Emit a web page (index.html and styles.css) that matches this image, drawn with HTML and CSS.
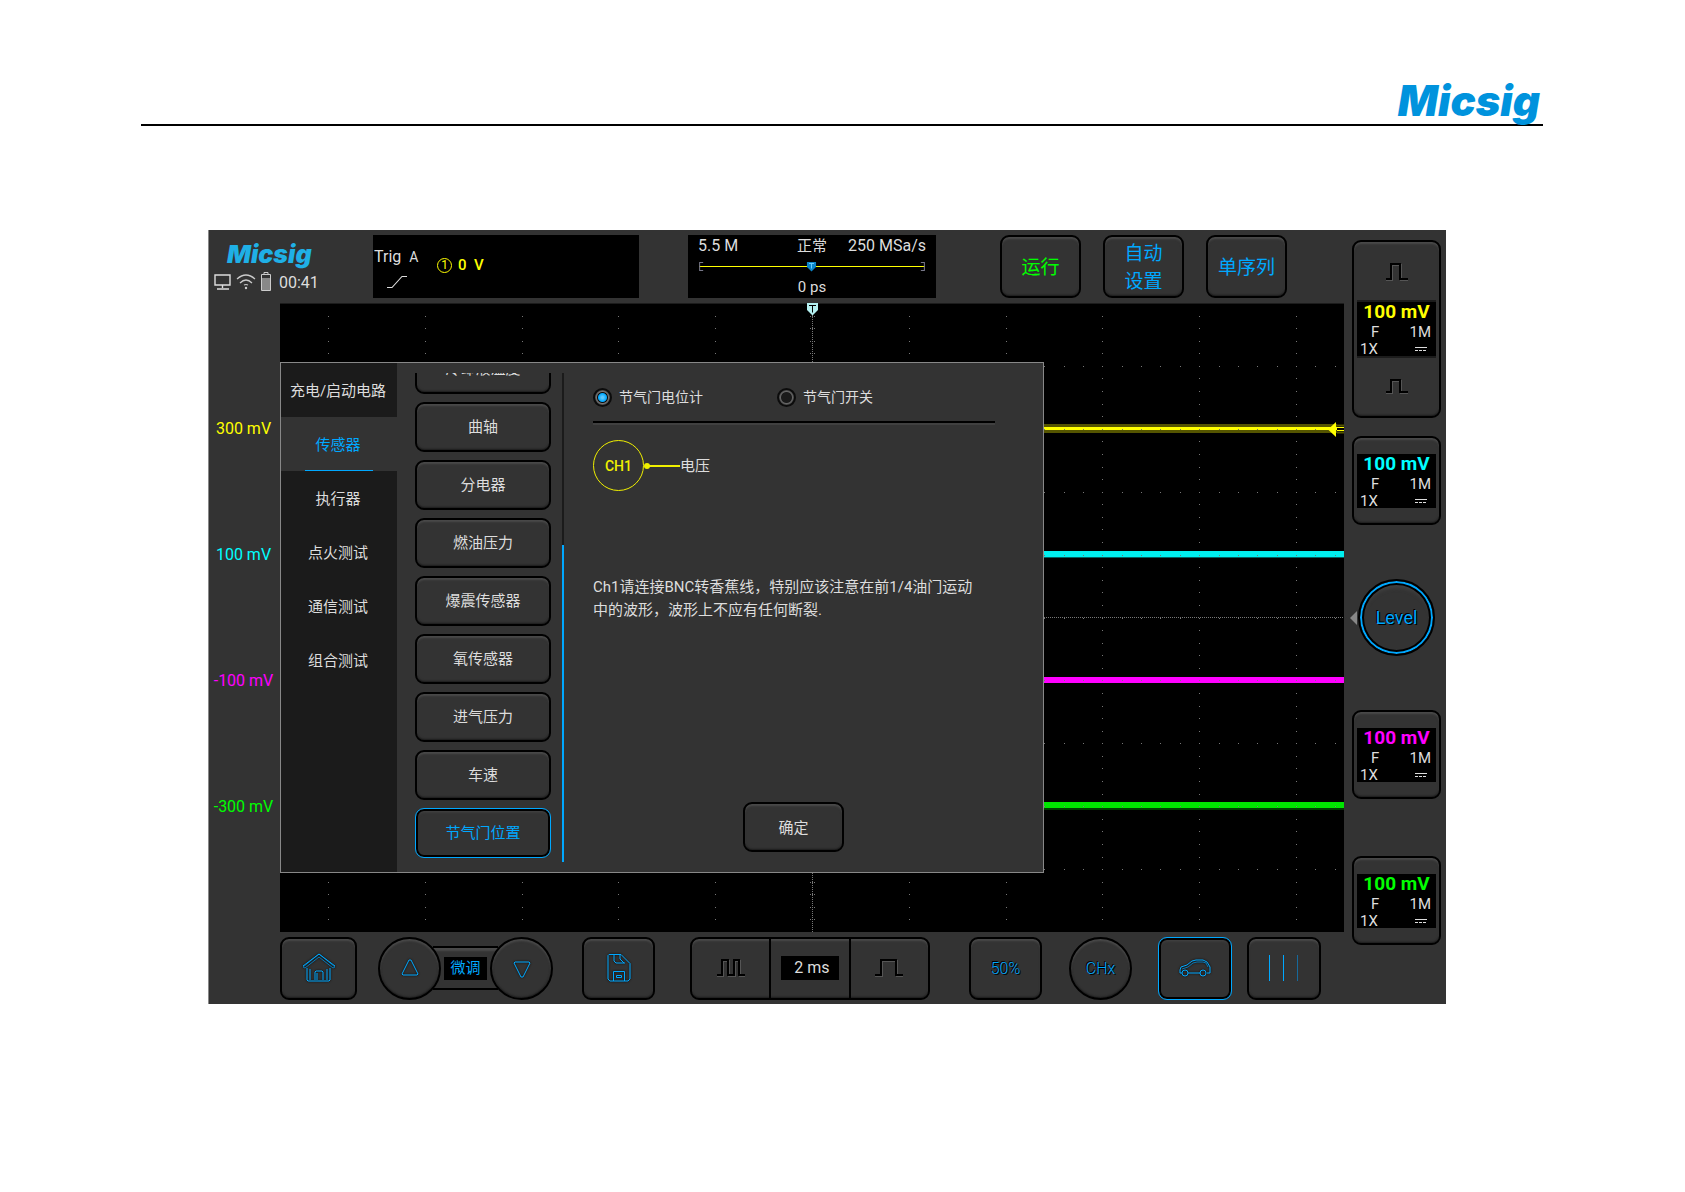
FILE: index.html
```html
<!DOCTYPE html>
<html lang="zh-CN">

<head>
  <meta charset="UTF-8">
  <meta name="viewport" content="width=device-width, initial-scale=1.0">
  <title>Micsig</title>
  <link rel="stylesheet" href="styles.css">
</head>

<body>

  <!-- Page header -->
  <header class="page-header">
    <span class="brand">Micsig</span>
  </header>

  <main class="scope">

    <!-- Top bar -->
    <div class="top-bar">
      <div class="status">
        <span class="brand brand-small">Micsig</span>
        <div class="status-row">
          <svg width="18" height="18" viewBox="0 0 18 18" fill="none" stroke="#ddd" stroke-width="1.4">
            <path d="M1 2h15v10H1zM8.5 12v3M3 16h12" />
          </svg>
          <svg width="20" height="18" viewBox="0 0 20 18" fill="none" stroke="#ccc" stroke-width="1.2">
            <path d="M1 6Q10-2 19 6M4 10Q10 4 16 10" />
            <path d="M8 12q2-1 4 0" />
            <circle cx="10" cy="15" r="0.6" fill="#ccc" />
          </svg>
          <svg width="12" height="20" viewBox="0 0 12 20">
            <path d="M4 2V.5h4V2M1.500 2.500h9v16h-9z" fill="none" stroke="#ccc" />
            <path d="M2 6h8v12H2z" fill="#888" />
          </svg>
          <span class="clock">00:41</span>
        </div>
      </div>

      <div class="trig-panel">
        <div class="trig-type">
          <span>Trig <small>A</small></span>
          <svg width="22" height="14" viewBox="0 0 22 14" fill="none" stroke="#ddd" stroke-width="1.1">
            <path d="M1 12.500h5L16 1.500h5" />
          </svg>
        </div>
        <div class="trig-level"><span class="trig-source">1</span>0 &nbsp;V</div>
      </div>

      <div class="time-panel">
        <div class="time-row">
          <span>5.5 M</span>
          <span class="mode">正常</span>
          <span>250 MSa/s</span>
        </div>
        <svg class="time-range" viewBox="0 0 226 12">
          <path d="M1 6.500h224" stroke="#ff0" />
          <path d="M5 2.500H1.500v8H5M221 2.500h3.500v8H221" fill="none" stroke="#778" />
          <path d="M108 2h9v5l-4.500 4.500L108 7z" fill="#0a84c8" />
          <path d="M110 3.500h5M112.500 3.500v5" stroke="#6cf" />
        </svg>
        <span class="time-offset">0 ps</span>
      </div>

      <div class="run-buttons">
        <button class="btn run">运行</button>
        <button class="btn">自动<br>设置</button>
        <button class="btn">单序列</button>
      </div>
    </div>

    <!-- Voltage labels -->
    <div class="volt-labels">
      <span class="ch1">300 mV</span>
      <span class="ch2">100 mV</span>
      <span class="ch3">-100 mV</span>
      <span class="ch4">-300 mV</span>
    </div>

    <!-- Waveform area -->
    <div class="plot">
      <svg class="plot-svg" viewBox="0 0 1064 629">
        <path d="M0 .5h1064" stroke="#1c1c1c" />
        <path d="M0 121h1064v9H0z" fill="#555500" />
        <path d="M0 124h1064v3H0z" fill="#ffff00" />
        <path d="M0 248h1064v6H0z" fill="#00f0f0" />
        <path d="M0 254h1064v1H0z" fill="#006060" />
        <path d="M0 374h1064v6H0z" fill="#ff00ff" />
        <path d="M0 499h1064v6H0z" fill="#00e600" />
        <path d="M0 505h1064v2H0z" fill="#003c00" />
        <path id="gridDots" fill="#777" shape-rendering="crispEdges" />
        <!-- trigger level arrow -->
        <path d="M1057 119h7v14h-7z" fill="#000" />
        <path d="M1056 119v15l-8-7.500z" fill="#ffff00" />
        <path d="M1057 122.500h7M1057 129.500h7" stroke="#555500" stroke-width="2" />
        <path d="M1057 124.500h7M1057 127.500h7" stroke="#ffff00" />
        <!-- trigger position -->
        <path d="M527 0h11v7l-5.500 5.500L527 7z" fill="#b4f0f0" />
        <path d="M529 2.500h7M532.500 2.500v7" stroke="#000" />
      </svg>

      <!-- Automotive test dialog -->
      <div class="dialog">
        <nav class="tabs">
          <button class="tab">充电/启动电路</button>
          <button class="tab active">传感器</button>
          <button class="tab">执行器</button>
          <button class="tab">点火测试</button>
          <button class="tab">通信测试</button>
          <button class="tab">组合测试</button>
        </nav>

        <div class="sensor-list">
          <button class="btn">冷却液温度</button>
          <button class="btn">曲轴</button>
          <button class="btn">分电器</button>
          <button class="btn">燃油压力</button>
          <button class="btn">爆震传感器</button>
          <button class="btn">氧传感器</button>
          <button class="btn">进气压力</button>
          <button class="btn">车速</button>
          <button class="btn selected">节气门位置</button>
        </div>
        <div class="scrollbar"><div class="scroll-thumb"></div></div>

        <div class="detail">
          <div class="options">
            <label><input type="radio" name="throttle" checked>节气门电位计</label>
            <label><input type="radio" name="throttle">节气门开关</label>
          </div>
          <div class="wiring">
            <span class="probe">CH1</span>
            <svg width="36" height="8" viewBox="0 0 36 8">
              <circle cx="3" cy="4" r="3" fill="#f0f000" />
              <path d="M3 4h33" stroke="#f0f000" stroke-width="2" />
            </svg>
            <span class="wire-name">电压</span>
          </div>
          <p class="hint">Ch1请连接BNC转香蕉线，特别应该注意在前1/4油门运动中的波形，波形上不应有任何断裂.</p>
          <button class="btn confirm">确定</button>
        </div>
      </div>
    </div>

    <!-- Channel column -->
    <aside class="channels">
      <div class="channel-group">
        <button class="pulse" aria-label="CH1 +">
          <svg width="24" height="20" viewBox="0 0 24 20" fill="none" stroke-width="2">
            <path d="M1 18h6V3h9v15h7" stroke="#555" />
            <path d="M1 17h5V2h9v15h8" stroke="#000" />
          </svg>
        </button>
        <div class="channel-box">
          <b class="ch1">100 mV</b>
          <span class="row"><i>F</i><i>1M</i></span>
          <span class="row low"><i>1X</i><svg width="12" height="6" viewBox="0 0 12 6" stroke="#ddd"><path d="M0 1.500h12" /><path d="M0 4.500h12" stroke-dasharray="3 1" /></svg></span>
        </div>
        <button class="pulse" aria-label="CH1 -">
          <svg width="24" height="16" viewBox="0 0 24 16" fill="none" stroke-width="2">
            <path d="M1 15h6V3h9v12h7" stroke="#555" />
            <path d="M1 14h5V2h9v12h8" stroke="#000" />
          </svg>
        </button>
      </div>

      <button class="btn channel">
        <span class="channel-box">
          <b class="ch2">100 mV</b>
          <span class="row"><i>F</i><i>1M</i></span>
          <span class="row low"><i>1X</i><svg width="12" height="6" viewBox="0 0 12 6" stroke="#ddd"><path d="M0 1.500h12" /><path d="M0 4.500h12" stroke-dasharray="3 1" /></svg></span>
        </span>
      </button>

      <div class="level-row">
        <svg width="7" height="14" viewBox="0 0 7 14"><path d="M7 0v14L0 7z" fill="#888" /></svg>
        <button class="level">Level</button>
      </div>

      <button class="btn channel">
        <span class="channel-box">
          <b class="ch3">100 mV</b>
          <span class="row"><i>F</i><i>1M</i></span>
          <span class="row low"><i>1X</i><svg width="12" height="6" viewBox="0 0 12 6" stroke="#ddd"><path d="M0 1.500h12" /><path d="M0 4.500h12" stroke-dasharray="3 1" /></svg></span>
        </span>
      </button>

      <button class="btn channel last">
        <span class="channel-box">
          <b class="ch4">100 mV</b>
          <span class="row"><i>F</i><i>1M</i></span>
          <span class="row low"><i>1X</i><svg width="12" height="6" viewBox="0 0 12 6" stroke="#ddd"><path d="M0 1.500h12" /><path d="M0 4.500h12" stroke-dasharray="3 1" /></svg></span>
        </span>
      </button>
    </aside>

    <!-- Bottom bar -->
    <div class="bottom-bar">
      <button class="btn home" aria-label="Home">
        <svg class="icon" width="34" height="32" viewBox="0 0 34 32">
          <path d="M1 15L17 2l16 13-2 1L17 5 3 16z" stroke="#0a78b4" />
          <path d="M1 14L17 2l16 12M5 16v12l1 1h21l1-1V16M13 28v-8l1-1h6l1 1v8M8 17v11M25 17v11M15 28v-7" />
        </svg>
      </button>

      <div class="fine">
        <button class="btn round" aria-label="Up">
          <svg class="icon" width="20" height="20" viewBox="0 0 20 20"><path d="M9 2h2l7 14-1 1H3l-1-1z" /></svg>
        </button>
        <div class="fine-bar"><span>微调</span></div>
        <button class="btn round" aria-label="Down">
          <svg class="icon" width="20" height="20" viewBox="0 0 20 20"><path d="M9 19h2l7-14-1-1H3L2 5z" /></svg>
        </button>
      </div>

      <button class="btn save" aria-label="Save">
        <svg class="icon" width="26" height="30" viewBox="0 0 26 30">
          <path d="M3 1.500h12l9 9V26l-2 2H4l-2-2V2.500zM8 2v6l2 2h9M14 2v4l4 4M7.500 28V18.500h11V28M10.500 22.500h5v2h-5z" />
        </svg>
      </button>

      <div class="timebase">
        <button aria-label="Zoom out">
          <svg width="30" height="20" viewBox="0 0 30 20" fill="none" stroke-width="2">
            <path d="M1 18h6V3h6v15h6V3h5v15h5" stroke="#555" />
            <path d="M1 17h5V2h6v15h6V2h5v15h6" stroke="#000" />
          </svg>
        </button>
        <div class="timebase-value"><span>2 ms</span></div>
        <button aria-label="Zoom in">
          <svg width="30" height="20" viewBox="0 0 30 20" fill="none" stroke-width="2">
            <path d="M1 18h7V3h15v15h6" stroke="#555" />
            <path d="M1 17h6V2h15v15h7" stroke="#000" />
          </svg>
        </button>
      </div>

      <button class="btn half">50%</button>
      <button class="btn round chx">CHx</button>
      <button class="btn car selected" aria-label="Automotive">
        <svg class="icon" width="34" height="20" viewBox="0 0 34 20">
          <path d="M4 15H2v-3l1-3 6-2 5-4 4-1h7l4 2 3 5v6h-3M10 15h12" />
          <path d="M4 11l6-2 5-4 4-1h6l3 1 2 4" stroke="#0a78b4" />
          <circle cx="7" cy="15" r="3" />
          <circle cx="25" cy="15" r="3" />
        </svg>
      </button>
      <button class="btn cursor" aria-label="Cursor">
        <svg width="32" height="28" viewBox="0 0 32 28" stroke="#00a8ff">
          <path d="M1.500 1v26M15.500 1v26" />
          <path d="M29.500 1v26" stroke="#17699b" />
        </svg>
      </button>
    </div>
  </main>

  <script>
    // Draw the graticule: 10 vertical divisions, centred on the trigger position
    const cx = 532;
    const stepX = 96.8;
    const stepY = 12.58;
    let d = '';

    function dot(x, y) {
      d += 'M' + Math.round(x) + ' ' + Math.round(y) + 'h1v1h-1z';
    }

    for (let row = 1; row < 50; row++) {
      const y = row * stepY;
      for (let col = -5; col <= 5; col++) {
        dot(cx + col * stepX, y);
      }
      dot(cx - 2, y);
      dot(cx + 2, y);
      if (row % 5 === 0) {
        for (let k = -27; k <= 27; k++) {
          dot(cx + k * stepX / 5, y);
        }
      }
    }
    for (let y = 0; y < 629; y += 2) {
      dot(cx, y);
    }
    for (let x = 0; x < 1064; x += 2) {
      dot(x, 314);
    }
    document.getElementById('gridDots').setAttribute('d', d);
  </script>
</body>

</html>
```
FILE: styles.css
```css
* {
  box-sizing: border-box;
}

body {
  margin: 0;
  background: #fff;
  color: #ddd;
  font-family: Roboto, "Noto Sans CJK SC", sans-serif;
  font-size: 15px;
}

button {
  font-family: inherit;
  font-size: 15px;
  padding: 0;
  cursor: pointer;
}

svg {
  display: block;
  flex-shrink: 0;
}

/* Page header */
.page-header {
  margin: 0 142px 0 141px;
  padding: 78px 3px 0 0;
  border-bottom: 2px solid #000;
  text-align: right;
}

.brand {
  display: block;
  color: #0093dd;
  font-family: Inter, Roboto, sans-serif;
  font-size: 42px;
  line-height: 46px;
  font-weight: 900;
  font-style: italic;
}

.brand-small {
  color: #1fb0e6;
  font-size: 25px;
  line-height: 26px;
}

/* Oscilloscope frame */
.scope {
  margin: 104px 239px 0 208px;
  display: grid;
  grid-template-columns: 71px 1fr 102px;
  grid-template-rows: 73px auto 72px;
  background: #333;
  border-left: 1px solid #888;
}

.ch1 {
  color: #ffff00;
}

.ch2 {
  color: #00ffff;
}

.ch3 {
  color: #ff00ff;
}

.ch4 {
  color: #00ff00;
}

/* Shared button look */
.btn,
.channel-group,
.timebase {
  background: #333;
  color: #ddd;
  border: 2px solid #000;
  border-radius: 9px;
  box-shadow: inset 0 2px 2px #4a4a4a, inset 0 -1px 2px #1c1c1c;
}

.btn.selected {
  border: 1px solid #00a8ff;
  color: #00a8ff;
  box-shadow: inset 0 0 0 2px #000, inset 0 3px 3px #444;
}

/* Top bar */
.top-bar {
  grid-column: 1 / 3;
  display: flex;
  padding: 5px 57px 5px 0;
}

.status {
  width: 164px;
}

.status .brand {
  padding: 6px 0 0 18px;
}

.status-row {
  display: flex;
  align-items: center;
  gap: 4px;
  padding: 5px 0 0 5px;
}

.status-row .clock {
  padding-left: 3px;
  font-size: 16px;
}

.trig-panel {
  width: 266px;
  height: 63px;
  background: #000;
  display: flex;
}

.trig-type {
  width: 64px;
  padding: 12px 0 0 1px;
  font-size: 16px;
}

.trig-type small {
  font-size: 14px;
  padding-left: 4px;
}

.trig-type svg {
  margin: 9px 0 0 12px;
}

.trig-level {
  display: flex;
  align-items: center;
  height: 60px;
  color: #ffff00;
  font-weight: 500;
}

.trig-source {
  width: 15px;
  height: 15px;
  margin-right: 6px;
  border: 1px solid #ffff00;
  border-radius: 50%;
  font-size: 12px;
  font-weight: 400;
  line-height: 13px;
  text-align: center;
}

.time-panel {
  width: 248px;
  height: 63px;
  margin-left: 49px;
  padding: 0 10px;
  background: #000;
  text-align: center;
}

.time-row {
  display: grid;
  grid-template-columns: 1fr auto 1fr;
  font-size: 16px;
  line-height: 22px;
}

.time-row span:first-child {
  text-align: left;
}

.time-row span:last-child {
  text-align: right;
}

.time-row .mode {
  font-size: 15px;
}

.time-range {
  width: 100%;
  margin-top: 3px;
}

.time-offset {
  display: block;
  line-height: 30px;
}

.run-buttons {
  display: flex;
  gap: 22px;
  margin-left: auto;
}

.run-buttons .btn {
  width: 81px;
  height: 63px;
  padding-top: 2px;
  color: #00a8ff;
  font-size: 19px;
  line-height: 28px;
}

.run-buttons .run {
  color: #00ff00;
}

/* Voltage labels */
.volt-labels {
  display: flex;
  flex-direction: column;
  padding: 63px 2px 0 0;
  font-size: 16px;
  text-align: center;
  line-height: 126px;
}

/* Waveform area */
.plot {
  position: relative;
  background: #000;
}

.plot-svg {
  width: 100%;
}

.dialog {
  position: absolute;
  left: 0;
  top: 59px;
  width: 764px;
  display: flex;
  background: #333;
  border: 1px solid #888;
}

.tabs {
  width: 116px;
  background: #1b1b1b;
  display: flex;
  flex-direction: column;
}

.tab {
  height: 54px;
  padding: 0 2px 2px 0;
  background: none;
  border: none;
  color: #ddd;
  white-space: nowrap;
}

.tab.active {
  color: #00a8ff;
  background: #333 linear-gradient(#00a8ff, #00a8ff) center bottom / 68px 1px no-repeat;
}

.sensor-list {
  width: 136px;
  height: 489px;
  margin: 10px 11px 10px 18px;
  padding-bottom: 4px;
  display: flex;
  flex-direction: column;
  justify-content: flex-end;
  gap: 8px;
  overflow: hidden;
}

.sensor-list .btn {
  height: 50px;
  padding-bottom: 4px;
  flex-shrink: 0;
}

.scrollbar {
  width: 2px;
  margin: 10px 0;
  background: #1b1b1b;
  display: flex;
  align-items: flex-end;
}

.scroll-thumb {
  width: 2px;
  height: 317px;
  background: #00a8ff;
}

.detail {
  flex: 1;
  display: flex;
  flex-direction: column;
  padding: 24px 48px 20px 29px;
}

.options {
  display: grid;
  grid-template-columns: 184px 1fr;
  padding-bottom: 14px;
  border-bottom: 2px solid #000;
  box-shadow: 0 2px 0 #404040;
}

.options label {
  display: flex;
  align-items: center;
  gap: 7px;
  font-size: 14px;
  line-height: 20px;
}

.options input {
  appearance: none;
  width: 19px;
  height: 19px;
  margin: 0;
  border: 2px solid #0c0c0c;
  border-radius: 50%;
  background: radial-gradient(circle, #1a1a1a 5px, #666 6px, #333 8px);
}

.options input:checked {
  background: radial-gradient(circle, #5cc8ff 1px, #00a8ff 4px, #0c0c0c 5px, #777 6px, #333 8px);
}

.wiring {
  display: flex;
  align-items: center;
  margin-top: 17px;
}

.wire-name {
  padding-bottom: 2px;
}

.probe {
  width: 51px;
  height: 51px;
  border: 1px solid #f0f000;
  border-radius: 50%;
  color: #f0f000;
  font-size: 14px;
  font-weight: 500;
  line-height: 51px;
  text-align: center;
}

.hint {
  max-width: 390px;
  margin: 85px 0 0;
  line-height: 23px;
}

.confirm {
  width: 101px;
  height: 50px;
  margin: auto auto 0 150px;
  padding-bottom: 2px;
}

/* Channel column */
.channels {
  grid-column: 3;
  grid-row: 1 / 4;
  padding: 10px 5px 0 8px;
}

.channel-group {
  height: 178px;
  display: flex;
  flex-direction: column;
}

.pulse {
  flex: 1;
  display: flex;
  align-items: center;
  justify-content: center;
  background: none;
  border: none;
}

.channel-group .channel-box {
  margin: 0 auto;
  box-shadow: 0 -2px 0 #1c1c1c, 0 2px 0 #1c1c1c;
}

.channel {
  display: flex;
  align-items: center;
  justify-content: center;
  width: 100%;
  height: 89px;
  margin-top: 18px;
}

.channel.last {
  margin-top: 57px;
}

.channel-box {
  width: 79px;
  background: #000;
  color: #ddd;
}

.channel-box b {
  display: block;
  font-size: 19px;
  line-height: 20px;
  text-align: center;
}

.channel-box .row {
  display: flex;
  justify-content: space-between;
  line-height: 20px;
  padding: 0 5px 0 14px;
}

.channel-box .low {
  align-items: center;
  line-height: 14px;
  padding: 0 9px 0 3px;
}

.channel-box i {
  font-style: normal;
}

.level-row {
  display: flex;
  align-items: center;
  gap: 1px;
  margin: 54px 0 54px -2px;
}

.level {
  width: 77px;
  height: 77px;
  border: 2px solid #000;
  border-radius: 50%;
  background: #333;
  box-shadow: inset 0 0 0 2px #00a8ff, inset 0 0 0 4px #000, inset 0 6px 4px #444;
  color: #00a8ff;
  font-size: 18px;
  text-shadow: 1px 1px 0 #000, -1px -1px 0 #000;
}

/* Bottom bar */
.bottom-bar {
  grid-column: 2;
  grid-row: 3;
  display: flex;
  align-items: center;
  padding-right: 23px;
}

.bottom-bar .btn {
  display: flex;
  align-items: center;
  justify-content: center;
  width: 74px;
  height: 63px;
}

.bottom-bar .home {
  width: 77px;
}

.bottom-bar .save,
.bottom-bar .half {
  width: 73px;
}

.icon {
  fill: none;
  stroke: #00a8ff;
  stroke-width: 1;
  filter: drop-shadow(0 0 1px #000);
}

.fine {
  display: flex;
  align-items: center;
  margin: 0 29px 0 21px;
}

.bottom-bar .round {
  width: 63px;
  border-radius: 50%;
  z-index: 1;
}

.fine-bar {
  width: 65px;
  height: 44px;
  margin: 0 -8px;
  border: solid #000;
  border-width: 2px 0;
  box-shadow: inset 0 3px 2px #4a4a4a;
  display: flex;
  align-items: center;
  justify-content: center;
}

.fine-bar span {
  width: 43px;
  background: #000;
  color: #00a8ff;
  line-height: 23px;
  text-align: center;
}

.timebase {
  display: flex;
  flex: 1;
  height: 63px;
  margin: 0 39px 0 35px;
}

.timebase button,
.timebase-value {
  flex: 1;
  display: flex;
  align-items: center;
  justify-content: center;
  background: none;
  border: none;
}

.timebase-value {
  border: solid #000;
  border-width: 0 2px;
}

.timebase-value span {
  width: 58px;
  padding-left: 4px;
  background: #000;
  font-size: 16px;
  line-height: 24px;
  text-align: center;
}

.bottom-bar .half,
.bottom-bar .chx {
  color: #00a8ff;
  font-size: 16px;
  font-weight: 300;
  text-shadow: 1px 1px 0 #000, -1px -1px 0 #000;
}

.bottom-bar .chx {
  margin: 0 26px 0 27px;
}

.bottom-bar .car {
  margin-right: 15px;
}
```
